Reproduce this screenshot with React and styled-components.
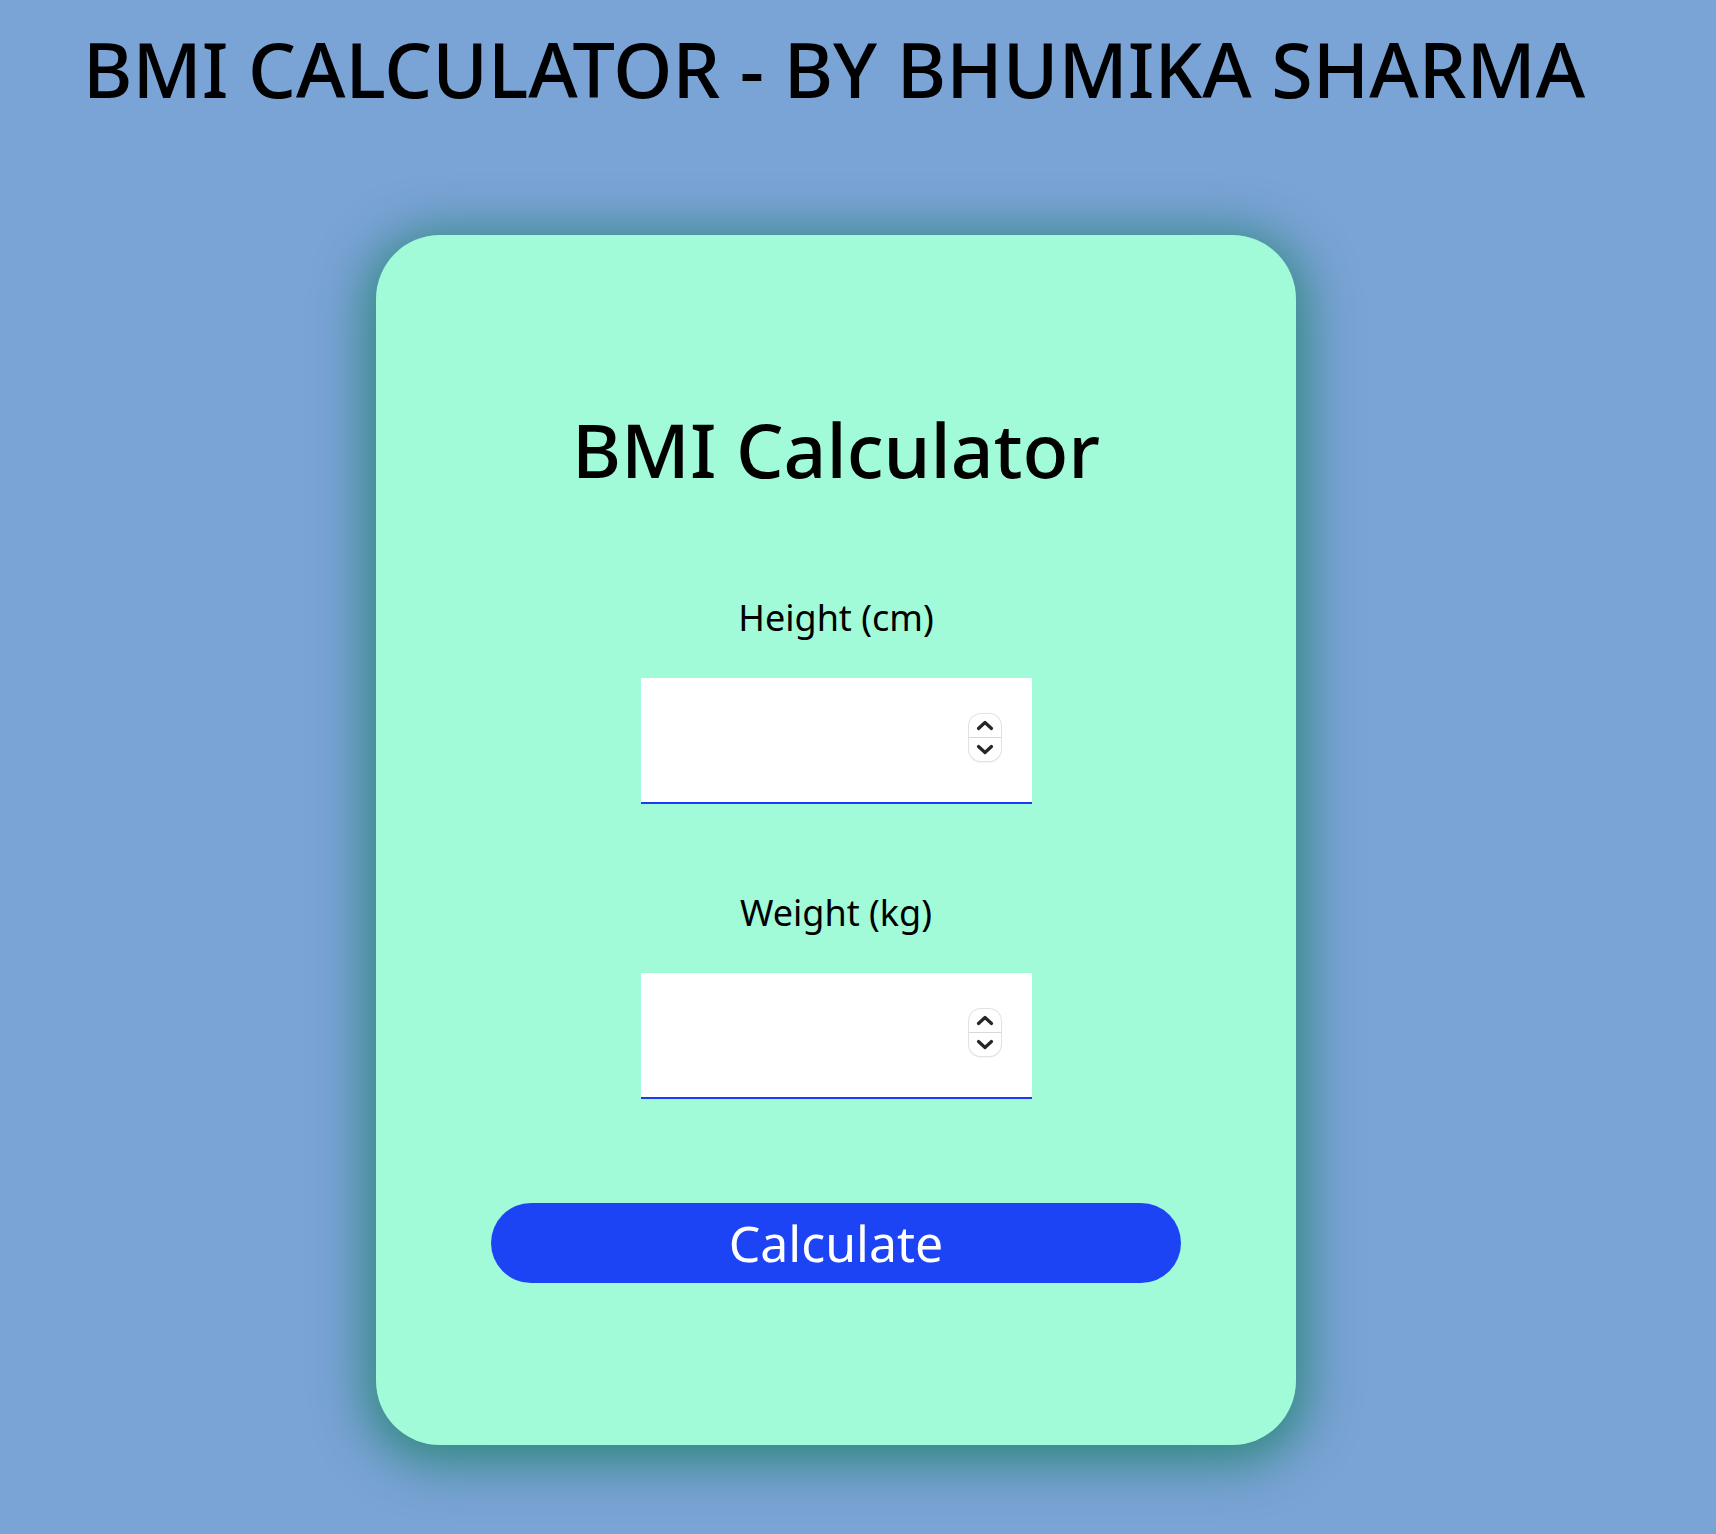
import React from "react";
import styled, { createGlobalStyle } from "styled-components";

const Global = createGlobalStyle`
  html, body { margin: 0; padding: 0; }
  body {
    background: #7aa3d6;
    font-family: "Noto Sans", "Open Sans", sans-serif;
    color: #000;
    min-height: 1534px;
  }
`;

const Page = styled.main`
  display: flex;
  flex-direction: column;
  padding: 23px 0 80px;
`;

const Title = styled.h1`
  margin: 0 0 0 83px;
  height: 91px;
  font-size: 75.5px;
  font-weight: 500;
  line-height: 91px;
  white-space: nowrap;
`;

const Stage = styled.div`
  display: flex;
  justify-content: center;
  padding-right: 44px;
  margin-top: 121px;
`;

const Card = styled.section`
  width: 920px;
  box-sizing: border-box;
  padding: 169px 0 162px;
  background: #a1fad8;
  border-radius: 64px;
  box-shadow: 0 8px 50px 10px rgba(35, 130, 110, 0.85);
  display: flex;
  flex-direction: column;
  align-items: center;
`;

const Heading = styled.h2`
  margin: 0 0 102px;
  font-size: 75px;
  font-weight: 500;
  line-height: 1.2;
`;

const Field = styled.div`
  display: flex;
  flex-direction: column;
  align-items: center;
  gap: 39px;
  & + & { margin-top: 87px; }
`;

const Label = styled.label`
  font-size: 36px;
  line-height: 1.2;
`;

const InputWrap = styled.div`
  position: relative;
  width: 391px;
  height: 126px;
`;

const NumberInput = styled.input`
  width: 100%;
  height: 100%;
  box-sizing: border-box;
  border: none;
  border-bottom: 2px solid #1a3cf5;
  background: #fff;
  outline: none;
  font-size: 36px;
  font-family: inherit;
  padding: 0 70px 0 16px;
  -moz-appearance: textfield;
  &::-webkit-inner-spin-button,
  &::-webkit-outer-spin-button {
    -webkit-appearance: none;
    margin: 0;
  }
`;

const Spinner = styled.div`
  position: absolute;
  top: 36px;
  right: 31px;
  width: 32px;
  height: 47px;
  box-sizing: border-box;
  border-radius: 12px;
  background: #fff;
  box-shadow: 0 0 0 1px #e2e2e2, 0 1px 2px rgba(0, 0, 0, 0.14);
  display: flex;
  flex-direction: column;
  pointer-events: none;
`;

const SpinHalf = styled.div`
  flex: 1;
  display: flex;
  align-items: center;
  justify-content: center;
  border-top: ${(p) => (p.$divider ? "1px solid #d8d8d8" : "none")};
`;

const Chevron = ({ up }) => (
  <svg width="18" height="11" viewBox="0 0 18 11">
    <path
      d={up ? "M2.5 8.5 L9 2.5 L15.5 8.5" : "M2.5 2.5 L9 8.5 L15.5 2.5"}
      fill="none"
      stroke="#262626"
      strokeWidth="3.2"
      strokeLinecap="round"
      strokeLinejoin="round"
    />
  </svg>
);

const Button = styled.button`
  margin-top: 104px;
  width: 690px;
  height: 80px;
  border: none;
  border-radius: 40px;
  background: #1c44f5;
  color: #fff;
  font-family: inherit;
  font-size: 50px;
  line-height: 1;
  cursor: pointer;
`;

function NumberField({ label }) {
  return (
    <Field>
      <Label>{label}</Label>
      <InputWrap>
        <NumberInput type="number" />
        <Spinner>
          <SpinHalf>
            <Chevron up />
          </SpinHalf>
          <SpinHalf $divider>
            <Chevron />
          </SpinHalf>
        </Spinner>
      </InputWrap>
    </Field>
  );
}

export default function App() {
  return (
    <>
      <Global />
      <Page>
        <Title>BMI CALCULATOR - BY BHUMIKA SHARMA</Title>
        <Stage>
          <Card>
            <Heading>BMI Calculator</Heading>
            <NumberField label="Height (cm)" />
            <NumberField label="Weight (kg)" />
            <Button>Calculate</Button>
          </Card>
        </Stage>
      </Page>
    </>
  );
}
